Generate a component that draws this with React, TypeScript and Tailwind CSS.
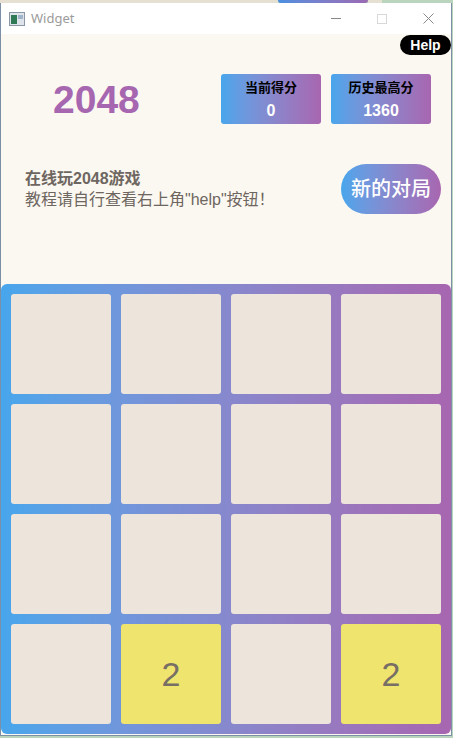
import React from "react";

const board: number[][] = [
  [0, 0, 0, 0],
  [0, 0, 0, 0],
  [0, 0, 0, 0],
  [0, 2, 0, 2],
];

function Tile({ value }: { value: number }) {
  return (
    <div
      className={`w-[100px] h-[100px] rounded-[3px] flex items-center justify-center text-[34px] text-[#776e65] ${
        value ? "bg-[#efe46e]" : "bg-[#ede4dc]"
      }`}
    >
      {value ? value : ""}
    </div>
  );
}

function ScoreBox({ label, value }: { label: string; value: string }) {
  return (
    <div className="w-[100px] h-[50px] rounded-[3px] bg-gradient-to-r from-[#47a6ec] to-[#a766b0] flex flex-col items-center pt-[5px]">
      <span className="text-[13px] font-bold text-black leading-[18px]">{label}</span>
      <span className="text-[16px] font-bold text-white leading-[20px] mt-[4px] font-['Liberation_Sans',sans-serif]">
        {value}
      </span>
    </div>
  );
}

export default function App() {
  return (
    <div className="w-[453px] h-[738px] bg-[#b9d5bd] font-['Liberation_Sans','Noto_Sans_CJK_SC',sans-serif] flex flex-col overflow-hidden">
      {/* desktop strip behind the window */}
      <div className="h-[3px] flex shrink-0">
        <div className="w-[278px] bg-[#e6e0d2]" />
        <div className="w-[90px] bg-gradient-to-r from-[#4a8fe0] to-[#9b69b3] rounded-b-full" />
        <div className="w-[14px] bg-[#e6e0d2]" />
        <div className="flex-1 bg-[#b9d5bd]" />
      </div>

      {/* window */}
      <div className="w-[452px] h-[733px] shrink-0 flex flex-col border-l border-r border-b border-[#7d8fa6] bg-white">
        {/* title bar */}
        <div className="h-[31px] shrink-0 flex items-center pl-[8px] bg-white">
          <svg width="16" height="14" viewBox="0 0 16 14">
            <rect x="0.5" y="0.5" width="15" height="13" fill="#dfe4ea" stroke="#8a96a3" />
            <rect x="2" y="3" width="6" height="9" fill="#2f7a55" />
            <rect x="9" y="3" width="5" height="4" fill="#9fb4c8" />
          </svg>
          <span className="ml-[6px] text-[13px] text-[#9a9a9a] font-['Noto_Sans',sans-serif]">Widget</span>
          <div className="ml-auto flex items-center h-full">
            <div className="w-[46px] flex justify-center">
              <div className="w-[10px] h-px bg-[#888]" />
            </div>
            <div className="w-[46px] flex justify-center">
              <div className="w-[10px] h-[10px] border border-[#d8d8d8]" />
            </div>
            <div className="w-[46px] flex justify-center">
              <svg width="11" height="11" viewBox="0 0 11 11">
                <path d="M0.5 0.5L10.5 10.5M10.5 0.5L0.5 10.5" stroke="#888" strokeWidth="1" />
              </svg>
            </div>
          </div>
        </div>

        {/* content */}
        <div className="flex-1 bg-[#fbf8f1] flex flex-col">
          <div className="flex justify-end pt-[1px]">
            <button className="h-[20px] w-[51px] rounded-full bg-black text-white text-[14px] font-bold leading-none">
              Help
            </button>
          </div>

          <div className="flex items-center mt-[19px] h-[50px]">
            <div className="ml-[52px] text-[39px] font-bold text-[#a666b0] font-['Liberation_Sans',sans-serif] leading-none">
              2048
            </div>
            <div className="ml-auto mr-[20px] flex gap-[10px]">
              <ScoreBox label="当前得分" value="0" />
              <ScoreBox label="历史最高分" value="1360" />
            </div>
          </div>

          <div className="flex items-center mt-[40px] h-[50px]">
            <div className="ml-[24px] text-[#6e6660] text-[16px] leading-[21px]">
              <div className="font-bold">在线玩2048游戏</div>
              <div>教程请自行查看右上角"help"按钮！</div>
            </div>
            <button className="ml-auto mr-[10px] w-[100px] h-[50px] rounded-full bg-gradient-to-r from-[#47a6ec] to-[#a766b0] text-white text-[20px] font-medium">
              新的对局
            </button>
          </div>

          <div className="mt-[70px] w-[450px] h-[450px] rounded-[6px] bg-gradient-to-r from-[#47a6ec] to-[#a766b0] p-[10px] grid grid-cols-4 gap-[10px]">
            {board.flat().map((v, i) => (
              <Tile key={i} value={v} />
            ))}
          </div>
        </div>
      </div>
    </div>
  );
}
